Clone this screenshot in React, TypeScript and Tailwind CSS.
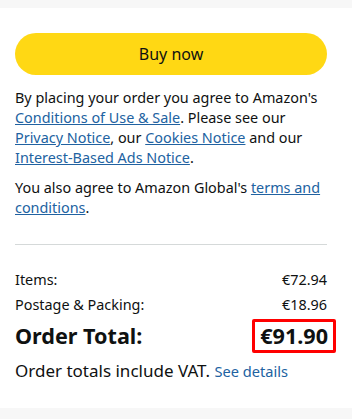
export default function App() {
  return (
    <div
      className="w-[352px] h-[419px] bg-[#f7f7f7] pt-[8px] text-[#0f1111]"
      style={{ fontFamily: '"Noto Sans", Arial, sans-serif' }}
    >
      <div className="bg-white h-[400px] px-[15px] pt-[25px]">
        <button className="w-[312px] h-[42px] rounded-full bg-[#ffd814] text-[16px] text-[#0f1111]">
          Buy now
        </button>

        <div className="mt-[13px] text-[14.4px] leading-[20px]">
          <p>
            By placing your order you agree to Amazon's{' '}
            <a className="text-[#2162a1] underline">Conditions of Use &amp; Sale</a>. Please see our{' '}
            <a className="text-[#2162a1] underline">Privacy Notice</a>, our{' '}
            <a className="text-[#2162a1] underline">Cookies Notice</a> and our{' '}
            <a className="text-[#2162a1] underline">Interest-Based Ads Notice</a>.
          </p>
          <p className="mt-[10px]">
            You also agree to Amazon Global's{' '}
            <a className="text-[#2162a1] underline">terms and conditions</a>.
          </p>
        </div>

        <hr className="mt-[26px] w-[312px] border-t border-[#d5d9d9]" />

        <div className="mt-[25px] w-[312px] text-[14.4px]">
          <div className="flex justify-between leading-[20px]">
            <span>Items:</span>
            <span>€72.94</span>
          </div>
          <div className="flex justify-between leading-[20px] mt-[5px]">
            <span>Postage &amp; Packing:</span>
            <span>€18.96</span>
          </div>
          <div className="flex justify-between items-center mt-[4px] font-bold text-[21.6px]">
            <span>Order Total:</span>
            <span className="border-[3px] border-[#ff0000] rounded-[2px] px-[5px] mr-[-9px] leading-[28px]">
              €91.90
            </span>
          </div>
          <div className="mt-[6px] text-[17px] leading-[24px]">
            Order totals include VAT.{' '}
            <a className="text-[#2162a1] text-[14.6px]">See details</a>
          </div>
        </div>
      </div>
    </div>
  );
}
